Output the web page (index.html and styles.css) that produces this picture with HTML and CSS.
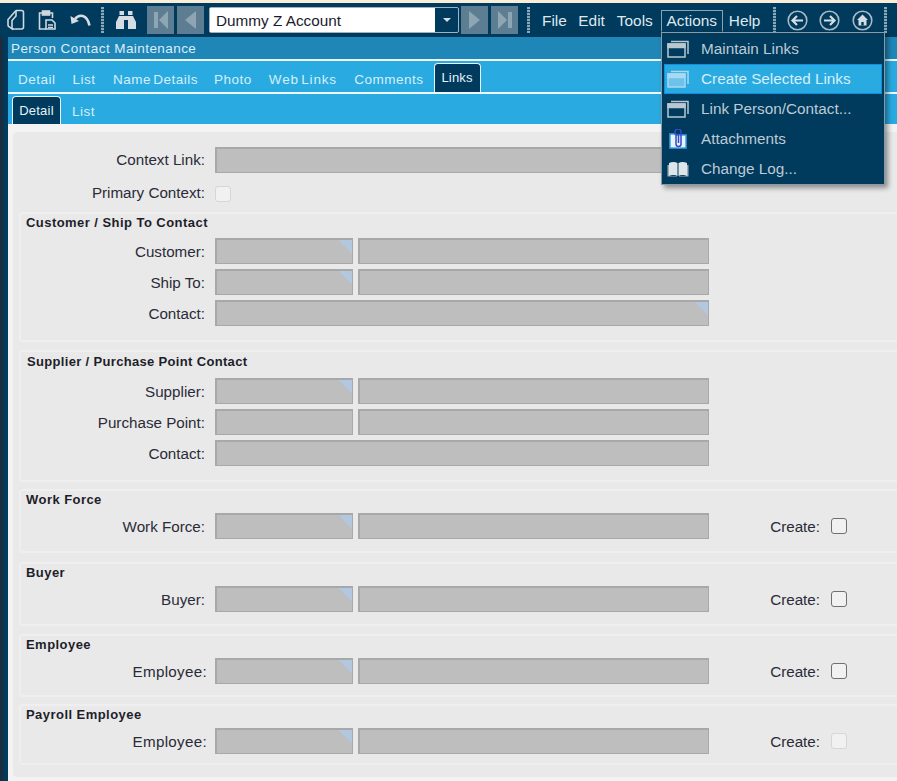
FILE: index.html
```html
<!DOCTYPE html>
<html lang="en">
<head>
<meta charset="utf-8">
<title>Person Contact Maintenance</title>
<link rel="stylesheet" href="styles.css">
</head>
<body>
<div class="app">
  <div class="strip"></div>
  <header class="toolbar">
    <svg class="ico i1" width="18" height="22" viewBox="0 0 18 22" fill="none" stroke="#cfd8de" stroke-width="1.6"><path d="M9 1.500h5.500a2 2 0 0 1 2 2V18a2 2 0 0 1-2 2H7.500"/><path d="M9 1.500 1 10.500v5.500a2 2 0 0 0 1 1.700L6 20.500"/><path d="M9 1.500v5.500L5 11.500v6a2 2 0 0 0 2.500 2.500"/></svg>
    <svg class="ico i2" width="18" height="22" viewBox="0 0 18 22" fill="none" stroke="#cfd8de" stroke-width="1.6"><path d="M4 4H1.500v16H8"/><path d="M12 4h2.500v5"/><rect x="4.500" y="2" width="7" height="4" fill="#cfd8de"/><path d="M8 11h6l3 3v6H8z"/><path d="M10 16h5M10 18.500h5"/></svg>
    <svg class="ico i3" width="21" height="14" viewBox="0 0 21 14" fill="none"><path d="M5 6C9 1 17 1 19.500 12.500" stroke="#d5dde2" stroke-width="2.600"/><path d="M0.500 3 1.500 11 9 8z" fill="#d5dde2"/></svg>
    <span class="sep s1"></span>
    <svg class="ico i4" width="20" height="18" viewBox="0 0 20 18" fill="#d5dde2"><rect x="3.500" y="0" width="4.500" height="4"/><rect x="12" y="0" width="4.500" height="4"/><rect x="8" y="5" width="4" height="4"/><path d="M3 5h5v13H0V11zM12 5h5l3 6v7h-8z"/></svg>
    <button class="nav n1"><svg width="14" height="18" viewBox="0 0 14 18" fill="#8ea5b3"><rect x="0" y="1" width="4" height="16"/><path d="M14 0v18L5 9z"/></svg></button>
    <button class="nav n2"><svg width="11" height="18" viewBox="0 0 11 18" fill="#8ea5b3"><path d="M11 0v18L0 9z"/></svg></button>
    <div class="combo"><span class="combo-text">Dummy Z Account</span><span class="combo-btn"><i class="caret"></i></span></div>
    <button class="nav n3"><svg width="11" height="18" viewBox="0 0 11 18" fill="#8ea5b3"><path d="M0 0v18l11-9z"/></svg></button>
    <button class="nav n4"><svg width="14" height="18" viewBox="0 0 14 18" fill="#8ea5b3"><rect x="10" y="1" width="4" height="16"/><path d="M0 0v18l9-9z"/></svg></button>
    <span class="sep s2"></span>
    <nav class="menubar">
      <span class="mi m-file">File</span>
      <span class="mi m-edit">Edit</span>
      <span class="mi m-tools">Tools</span>
      <span class="mi m-actions">Actions</span>
      <span class="mi m-help">Help</span>
    </nav>
    <span class="sep s3"></span>
    <svg class="ico c1" width="21" height="21" viewBox="0 0 21 21" fill="none" stroke="#d5dde2"><circle cx="10.500" cy="10.500" r="9.300" stroke="#a9bac5" stroke-width="1.600"/><path d="M16 10.500H6M10 6l-4.500 4.500L10 15" stroke-width="2.200"/></svg>
    <svg class="ico c2" width="21" height="21" viewBox="0 0 21 21" fill="none" stroke="#d5dde2"><circle cx="10.500" cy="10.500" r="9.300" stroke="#a9bac5" stroke-width="1.600"/><path d="M5 10.500h10M11 6l4.500 4.500L11 15" stroke-width="2.200"/></svg>
    <svg class="ico c3" width="21" height="21" viewBox="0 0 21 21" fill="none"><circle cx="10.500" cy="10.500" r="9.300" stroke="#a9bac5" stroke-width="1.600"/><path d="M10.500 4.500 16 10h-1.500v5.500h-8V10H5z" fill="#d5dde2"/><rect x="9.300" y="12" width="2.400" height="3.500" fill="#003a5c"/></svg>
    <span class="sep s4"></span>
  </header>
  <div class="main">
    <div class="rail"></div>
    <div class="work">
      <div class="titlebar">Person Contact Maintenance</div>
      <div class="tabs tabs-top">
        <span class="tab t-detail">Detail</span>
        <span class="tab t-list">List</span>
        <span class="tab t-name">Name Details</span>
        <span class="tab t-photo">Photo</span>
        <span class="tab t-web">Web Links</span>
        <span class="tab t-comments">Comments</span>
        <span class="tab active t-links">Links</span>
      </div>
      <div class="tabs tabs-sub">
        <span class="tab active t-subdetail">Detail</span>
        <span class="tab t-sublist">List</span>
      </div>
      <main class="canvas">
        <section class="panel">
          <div class="row row-context"><label class="lbl">Context Link:</label><span class="field wide"></span></div>
          <div class="row row-primary"><label class="lbl">Primary Context:</label><span class="check off"></span></div>

          <div class="group g-customer">
            <h3 class="gtitle">Customer / Ship To Contact</h3>
            <div class="row"><label class="lbl">Customer:</label><span class="field code tri"></span><span class="field name"></span></div>
            <div class="row"><label class="lbl">Ship To:</label><span class="field code tri"></span><span class="field name"></span></div>
            <div class="row"><label class="lbl">Contact:</label><span class="field wide tri"></span></div>
          </div>

          <div class="group g-supplier">
            <h3 class="gtitle">Supplier / Purchase Point Contact</h3>
            <div class="row"><label class="lbl">Supplier:</label><span class="field code tri"></span><span class="field name"></span></div>
            <div class="row"><label class="lbl">Purchase Point:</label><span class="field code"></span><span class="field name"></span></div>
            <div class="row"><label class="lbl">Contact:</label><span class="field wide"></span></div>
          </div>

          <div class="group g-single g-work">
            <h3 class="gtitle">Work Force</h3>
            <div class="row"><label class="lbl">Work Force:</label><span class="field code tri"></span><span class="field name"></span><label class="create">Create:</label><span class="check"></span></div>
          </div>

          <div class="group g-single g-buyer">
            <h3 class="gtitle">Buyer</h3>
            <div class="row"><label class="lbl">Buyer:</label><span class="field code tri"></span><span class="field name"></span><label class="create">Create:</label><span class="check"></span></div>
          </div>

          <div class="group g-single g-emp">
            <h3 class="gtitle">Employee</h3>
            <div class="row"><label class="lbl lbl-wide">Employee:</label><span class="field code tri"></span><span class="field name"></span><label class="create">Create:</label><span class="check"></span></div>
          </div>

          <div class="group g-single g-pay">
            <h3 class="gtitle">Payroll Employee</h3>
            <div class="row"><label class="lbl lbl-wide">Employee:</label><span class="field code tri"></span><span class="field name"></span><label class="create">Create:</label><span class="check off"></span></div>
          </div>
        </section>
      </main>
    </div>
  </div>

  <div class="menu">
    <div class="menu-item"><svg class="mico" width="22" height="18" viewBox="0 0 22 18" fill="none" stroke="#b9c7d1" stroke-width="1.500"><path d="M4 1.500h17V14"/><rect x="1" y="4" width="17" height="13" /><rect x="1" y="4" width="17" height="3.500" fill="#b9c7d1"/></svg><span>Maintain Links</span></div>
    <div class="menu-item hot"><svg class="mico" width="22" height="18" viewBox="0 0 22 18" fill="none" stroke="#a9d8f0" stroke-width="1.500"><path d="M4 1.500h17V14"/><rect x="1" y="4" width="17" height="13" fill="#6cc2ea"/><rect x="1" y="4" width="17" height="3.500" fill="#a9d8f0"/></svg><span>Create Selected Links</span></div>
    <div class="menu-item"><svg class="mico" width="22" height="18" viewBox="0 0 22 18" fill="none" stroke="#b9c7d1" stroke-width="1.500"><path d="M4 1.500h17V14"/><rect x="1" y="4" width="17" height="13"/><rect x="1" y="4" width="17" height="3.500" fill="#b9c7d1"/></svg><span>Link Person/Contact...</span></div>
    <div class="menu-item"><svg class="mico" width="22" height="20" viewBox="0 0 22 20" fill="none"><path d="M3 5h4l2 1h10v13H3z" fill="#e8f4fc" stroke="#3fa0e8" stroke-width="1.500"/><path d="M8 5V3a3 3 0 0 1 6 0v12a2.500 2.500 0 0 1-5 0V6.500a1 1 0 0 1 2.500 0V14" stroke="#3348c8" stroke-width="1.500"/></svg><span>Attachments</span></div>
    <div class="menu-item"><svg class="mico" width="22" height="16" viewBox="0 0 22 16" fill="#dfe6ea"><path d="M2 2c3-1.500 6-1.500 8.500 0v13c-2.500-1.500-5.500-1.500-8.500 0z"/><path d="M20 2c-3-1.500-6-1.500-8.500 0v13c2.500-1.500 5.500-1.500 8.500 0z"/><path d="M0.500 4H2v12h8v-.5H.5zM21.500 4H20v12h-8v-.5h9.500z" fill="#9fb0bb"/></svg><span>Change Log...</span></div>
  </div>
</div>
</body>
</html>
```
FILE: styles.css
```css
* { box-sizing: border-box; }
html, body { margin: 0; height: 100%; overflow: hidden; }
body { font-family: "Liberation Sans", Arial, sans-serif; font-size: 15.200px; color: #2b2b38; background: #f3f3f3; }
.app { position: relative; width: 897px; height: 781px; overflow: hidden; display: flex; flex-direction: column; }
.strip { height: 3px; background: #fbeed9; flex: none; }

/* toolbar */
.toolbar { height: 34px; flex: none; background: #003a5c; display: flex; align-items: center; padding-left: 7px; }
.ico { flex: none; }
.i2 { margin-left: 13px; }
.i3 { margin-left: 14px; }
.sep { flex: none; width: 3px; height: 26px; background: repeating-linear-gradient(#8fa6b4 0 2px, #1c5273 2px 3px); }
.s1 { margin-left: 10px; }
.i4 { margin-left: 12px; }
.nav { flex: none; width: 27px; height: 28px; padding: 0; border: 0; background: #5d7e92; display: flex; align-items: center; justify-content: center; }
.n1 { margin-left: 11px; }
.n2 { margin-left: 3px; }
.n3 { margin-left: 2px; }
.n4 { margin-left: 3px; }
.combo { flex: none; margin-left: 5px; width: 250px; height: 26px; display: flex; background: #003a5c; border: 1px solid #9fb3bf; border-radius: 2px; }
.combo-text { flex: 1; background: #fff; color: #1a1a2e; font-size: 15.300px; line-height: 25px; padding-left: 6px; }
.combo-btn { width: 23px; display: flex; align-items: center; justify-content: center; }
.caret { width: 0; height: 0; border: 4px solid transparent; border-top: 4px solid #d5dde2; border-bottom: 0; }
.s2 { margin-left: 9px; }
.menubar { display: flex; align-items: center; height: 22px; margin-top: 2px; flex: none; width: 243px; color: #dfe8ee; font-size: 15.400px; }
.mi { flex: none; }
.m-file { margin-left: 12px; }
.m-edit { margin-left: 11.500px; }
.m-tools { margin-left: 12px; }
.m-actions { margin-left: 8px; width: 62px; height: 22px; line-height: 19px; text-align: center; border: 1px solid #8ea3b0; border-bottom-color: #003a5c; }
.m-help { margin-left: 6px; }
.c1 { margin-left: 11px; }
.c2 { margin-left: 11px; }
.c3 { margin-left: 12px; }
.s4 { margin-left: 11px; }

/* main */
.main { flex: 1; display: flex; min-height: 0; }
.rail { width: 8px; flex: none; background: #003a5c; border-left: 3px solid #1b2d3c; }
.work { flex: 1; min-width: 0; display: flex; flex-direction: column; }
.titlebar { height: 22px; flex: none; background: #1f86b8; color: #dceef8; font-size: 13.500px; line-height: 23px; padding-left: 3px; letter-spacing: .43px; }
.tabs { flex: none; background: #29abe2; border-top: 2px solid #eef8fd; display: flex; position: relative; color: #d7eefa; font-size: 13.500px; letter-spacing: .5px; word-spacing: -2px; }
.tabs-top { height: 33px; padding-left: 10px; align-items: flex-end; padding-bottom: 5px; }
.tabs-sub { height: 32px; padding-left: 4px; align-items: flex-end; }
.tab { flex: none; }
.tab.active { background: #003a5c; color: #e6f3fa; border: 1px solid #e8f4fa; border-bottom: 0; border-radius: 4px 4px 0 0; text-align: center; font-size: 13px; letter-spacing: .2px; }
.t-list { margin-left: 17px; }
.t-name { margin-left: 17.500px; }
.t-photo { margin-left: 16px; }
.t-web { margin-left: 17px; letter-spacing: .8px; }
.t-comments { margin-left: 17.500px; }
.t-links { margin-left: 10px; width: 47px; height: 29px; line-height: 27px; margin-bottom: -5px; align-self: flex-end; }
.t-subdetail { width: 49px; height: 28px; line-height: 27px; }
.t-sublist { margin-left: 11px; padding-bottom: 5px; }

.canvas { flex: 1; min-height: 0; padding: 8px 0 0 5px; background: #f3f3f3; }
.panel { height: 645px; background: #e9e9e9; border-radius: 4px 0 0 4px; padding: 15px 0 0 6px; }
.row { display: flex; align-items: center; height: 26px; margin-bottom: 5px; }
.lbl { flex: none; width: 186px; text-align: right; margin-right: 10px; }
.group .lbl { width: 179px; }
.group .lbl-wide { width: 181px; margin-right: 8px; letter-spacing: .3px; }
.field { flex: none; height: 26px; background: #bebebe; border: 1px solid #a8a8a8; border-width: 2px 1px 1px 2px; }
.code { width: 138px; margin-right: 5px; }
.name { width: 351px; }
.wide { width: 494px; }
.tri { background-image: linear-gradient(225deg, #b3c7df 9.500px, transparent 9.500px); }
.check { flex: none; width: 16px; height: 16px; background: #f1f1f1; border: 1px solid #6f6f6f; border-radius: 3px; }
.check.off { border-color: #d6d6d6; }
.create { flex: none; margin-left: 61px; width: 50px; text-align: right; margin-right: 11px; }
.row-context { margin-bottom: 13px; }
.row-context .lbl { padding-bottom: 2px; }
.row-primary { height: 16px; margin-bottom: 10px; }
.row-primary .lbl { padding-bottom: 3px; }

.group { background: #e9e9e9; border: 2px solid #efefef; border-right: 0; border-radius: 4px 0 0 4px; padding-left: 5px; }
.gtitle { margin: 0; font-size: 13px; font-weight: bold; letter-spacing: .45px; color: #1e1e2a; line-height: 15px; }
.group .row:last-child { margin-bottom: 0; }
.g-customer { height: 130px; padding-top: 1px; margin-bottom: 8px; }
.g-customer .gtitle { margin-bottom: 8px; }
.g-supplier { height: 132px; padding-top: 2px; margin-bottom: 7px; }
.g-supplier .gtitle { margin-bottom: 9px; padding-left: 1px; letter-spacing: .33px; }
.g-single { height: 64px; padding-top: 1px; margin-bottom: 9px; }
.g-single .gtitle { margin-bottom: 6px; }
.g-buyer { margin-bottom: 8px; }
.g-emp { height: 63px; margin-bottom: 7px; }
.g-pay { height: 61px; margin-bottom: 0; }

/* menu overlay */
.menu { position: absolute; left: 661px; top: 32px; width: 224px; height: 153px; background: #003a5c; border: 1px solid #8a9ba6; box-shadow: 3px 3px 5px rgba(0,0,0,.4); padding: 1px 2px; color: #bccbd6; font-size: 15.300px; }
.menu-item { height: 30px; display: flex; align-items: center; border: 1px solid transparent; padding-left: 2px; }
.menu-item span { margin-left: 12px; }
.mico { flex: none; width: 22px; }
.menu-item.hot { background: #29abe2; border-color: #0f8fe0; color: #d7eefa; }
```
